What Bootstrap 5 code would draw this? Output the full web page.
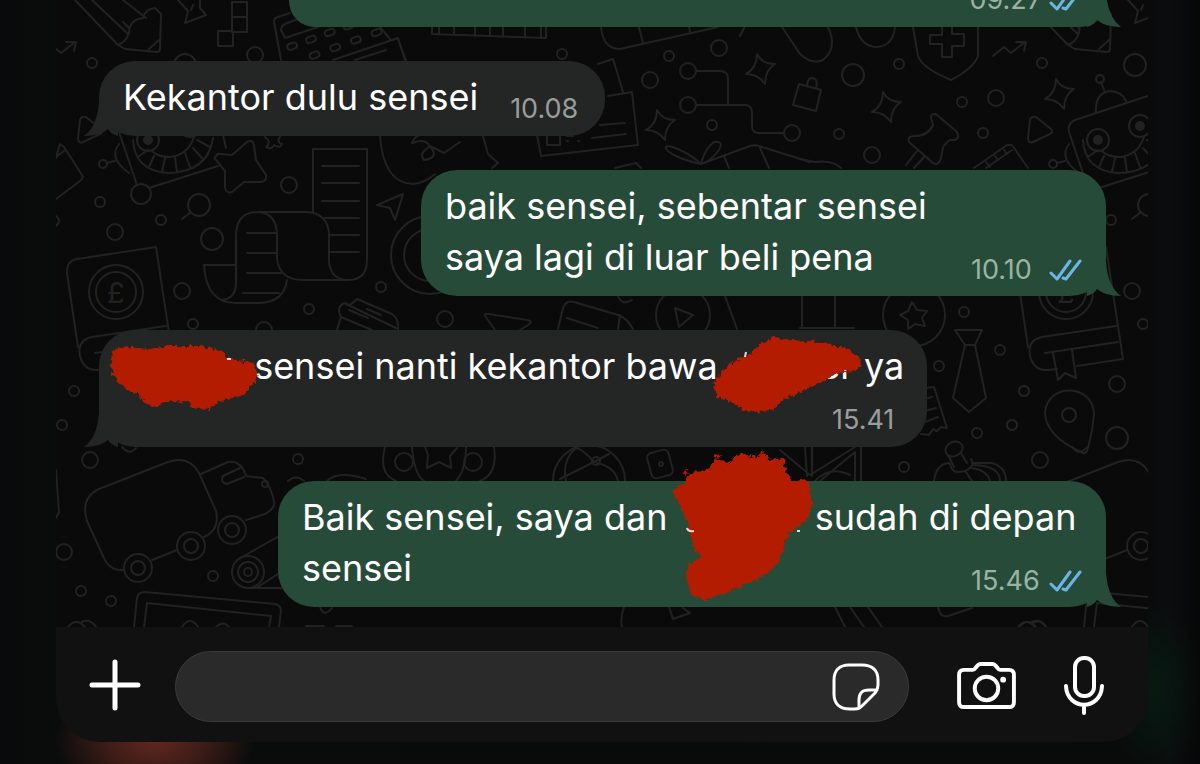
<!DOCTYPE html>
<html lang="id">
<head>
<meta charset="utf-8">
<meta name="viewport" content="width=device-width, initial-scale=1">
<title>Chat</title>
<link href="https://cdn.jsdelivr.net/npm/bootstrap@5.3.0/dist/css/bootstrap.min.css" rel="stylesheet">
<style>
  body {
    font-family: Inter, "Liberation Sans", sans-serif;
    color: #fff;
    background:
      radial-gradient(ellipse 100px 56px at 155px calc(100% - 22px), #60271f 0, #3c1c17 50%, transparent 100%),
      radial-gradient(ellipse 50px 90px at calc(100% - 46px) calc(100% - 75px), #071a12 0, transparent 100%),
      linear-gradient(90deg, #080a0b 0, #0a0c0c 40px, #090a0a calc(100% - 52px), #0b0c0e calc(100% - 30px), #060707 100%);
  }
  .chat-frame { padding: 0 52px 22px 56px; }
  .thread { background: #0a0a0a; padding: 0 42px 20px 43px; gap: 34px; min-height: 0; }
  .doodles { fill: none; stroke: #222; stroke-width: 2; stroke-linecap: round; stroke-linejoin: round; }
  .bubble { position: relative; flex: none; padding: 11px 24px 13px; border-radius: 36px; font-size: 36px; line-height: 51px; }
  .received { background: #242625; }
  .sent { background: #274b39; }
  .bubble-max { width: 828px; max-width: 100%; }
  .bubble-mid { width: 685px; max-width: 100%; }
  .bubble-cut { width: 817px; max-width: 100%; }
  .stamp { font-size: 27px; line-height: 28px; color: #9b9d9c; gap: 7px; }
  .stamp time { min-width: 71px; }
  .sent .stamp { color: #9ab3a4; }
  .stamp-row { margin-top: 14px; }
  .tail { position: absolute; bottom: 0; width: 34px; height: 42px; }
  .sent .tail { right: -15px; fill: #274b39; }
  .received .tail { left: -15px; fill: #242625; }
  .ticks { width: 33px; height: 24px; fill: none; stroke: #6cb6e6; stroke-width: 3; stroke-linecap: round; stroke-linejoin: round; }
  .hidden-word { position: relative; display: inline-block; height: 51px; vertical-align: top; text-align: right; }
  .word-a { width: 121px; }
  .word-b { width: 126px; }
  .word-c { width: 127px; }
  .scribble { position: absolute; fill: #b41c02; overflow: visible; }
  .word-a .scribble { left: -14px; top: 4px; width: 150px; height: 66px; }
  .word-b .scribble { left: -16px; top: -5px; width: 152px; height: 80px; }
  .word-c .scribble { left: -8px; top: -41px; width: 144px; height: 154px; }
  .composer { background: #111; border-radius: 0 0 44px 44px; padding: 24px 44px 20px 30px; }
  .tool { background: none; border: 0; padding: 0; line-height: 0; }
  .composer > .tool { padding-bottom: 3px; }
  .tool svg { fill: none; stroke: #fff; stroke-linecap: round; stroke-linejoin: round; }
  .entry { background: #2a2a2a; border: 1px solid #3b3b3b; border-radius: 36px; height: 71px; padding: 0 28px 0 24px; margin: 0 48px 0 31px; }
  .entry input { background: none; border: 0; outline: 0; color: #fff; font-size: 36px; min-width: 0; }
</style>
</head>
<body>
<main class="chat-frame d-flex flex-column vh-100 overflow-hidden">
  <section class="thread position-relative flex-grow-1 d-flex flex-column justify-content-end overflow-hidden">
    <svg class="doodles position-absolute top-0 start-0 w-100 h-100" viewBox="56 0 1092 627" preserveAspectRatio="xMidYMid slice" aria-hidden="true">
      <defs>
        <g id="tile">
          <!-- pencil -->
          <path d="M75 0L118 45L125 49L157 52Q160 52 160 49L161 14L155 8Q145 9 143 18Q129 20 129 33Q126 42 118 45M92 0L128 34M123 0L146 18M129 28l-6 -6M149 49L160 39"/>
          <path d="M43 56L54 47L61 53L75 42M66 42L76 42L74 51"/>
          <path d="M178 0L188 11L185 23L206 15L200 8V0M191 10l2 -5"/>
          <circle cx="92" cy="63" r="5"/><circle cx="185" cy="65" r="11"/>
          <path d="M80 120Q81 116 86 117L101 129Q104 132 100 134L83 142Q78 144 78 138Z"/>
          <!-- robot -->
          <path d="M198 96L125 120Q117 124 119 132L137 185M149 188L218 166M223 135L226 148M146 112Q145 92 161 91Q172 92 176 101M154 90L151 82"/>
          <circle cx="150" cy="79" r="4"/><circle cx="148" cy="140" r="11"/><circle cx="190" cy="126" r="11"/>
          <circle cx="148" cy="140" r="4" fill="#222"/><circle cx="190" cy="126" r="4" fill="#222"/>
          <path d="M133 140Q135 171 168 173Q208 172 213 138M152 151Q158 157 170 157Q188 155 194 137M139 156L148 150M149 167L154 156M162 172L165 158M177 172L175 158M190 167L185 153M202 158L193 148M210 147L197 140"/>
          <path d="M119 144Q108 158 129 173M115 161L107 163"/><circle cx="103" cy="164" r="4"/><circle cx="141" cy="194" r="10"/>
          <circle cx="100" cy="202" r="5"/><circle cx="199" cy="205" r="11"/><path d="M182 219L191 212"/>
          <circle cx="161" cy="220" r="5"/><circle cx="115" cy="232" r="8"/><circle cx="182" cy="291" r="8"/><circle cx="193" cy="324" r="5"/>
          <!-- coin book -->
          <path d="M78 347L67 273Q66 261 77 259L156 247L173 359L127 366M166 326L92 337Q77 340 80 356Q84 371 98 370L107 369M95 353L168 342M103 353L108 380L115 373L126 378L122 350"/>
          <circle cx="116" cy="292" r="27"/><circle cx="116" cy="292" r="20"/>
          <circle cx="74" cy="391" r="5"/><circle cx="62" cy="425" r="5"/><circle cx="90" cy="460" r="8"/><circle cx="64" cy="552" r="8"/>
          <!-- van -->
          <path d="M123 570Q109 571 103 556L87 521Q80 498 99 489L168 462Q189 455 199 473L216 511Q220 530 204 537M152 560L177 550M201 474L228 462Q241 460 246 476L263 478Q270 484 274 501Q276 508 265 514L246 520M240 468L223 476Q220 483 227 484L244 477"/>
          <circle cx="138" cy="568" r="14"/><circle cx="138" cy="568" r="7"/><circle cx="191" cy="546" r="14"/><circle cx="191" cy="546" r="7"/>
          <circle cx="232" cy="530" r="14"/><circle cx="232" cy="530" r="7"/><circle cx="265" cy="484" r="3"/>
          <circle cx="81" cy="591" r="5"/><circle cx="111" cy="601" r="5"/>
          <!-- picture frame -->
          <path d="M134 627L137 598Q138 592 145 592L275 604Q281 605 281 611L279 627M144 627L147 603L271 616L269 627M68 627Q76 617 85 627M82 622Q90 618 96 627M182 627Q190 615 198 627M216 627Q223 620 229 627"/>
          <path d="M122 447Q130 456 136 448"/>
        </g>
        <path id="spark" d="M-4 -15Q1 -5 14 -5Q4 1 4 15Q-3 5 -15 5Q-4 -1 -4 -15Z"/>
      </defs>
      <use href="#tile"/><use href="#tile" x="950"/>
      <g fill="#222" stroke="none" font-size="29"><text x="107" y="303">£</text><text x="1057" y="303">£</text></g>
      <use href="#spark" x="761" y="69"/><use href="#spark" x="661" y="125"/><use href="#spark" x="887" y="107"/><use href="#spark" x="1060" y="94"/>
      <path d="M56 158L60 144L64 147L82 175Q84 178 80 181L56 199M56 157L64 151M56 470L59 512L56 518M56 216Q62 221 56 226"/>
      <path d="M232 2h15v30h-15zM232 17h15M218 31h15v15h-15z"/>
      <!-- calculator -->
      <path d="M281 60L274 22Q274 18 278 17L290 13M281 30Q281 26 285 24L305 16M285 38L330 23M281 30L285 38M333 60L398 38L405 60M355 60L386 50M380 27L390 39"/>
      <g transform="rotate(-20 330 42)"><rect x="288" y="30" width="10" height="6" rx="3"/><rect x="308" y="30" width="10" height="6" rx="3"/><rect x="328" y="30" width="10" height="6" rx="3"/><rect x="348" y="30" width="10" height="6" rx="3"/><rect x="306" y="46" width="10" height="6" rx="3"/><rect x="328" y="46" width="10" height="6" rx="3"/><rect x="350" y="46" width="10" height="6" rx="3"/><rect x="372" y="46" width="10" height="6" rx="3"/></g>
      <circle cx="255" cy="55" r="8"/><circle cx="289" cy="185" r="8"/><circle cx="212" cy="239" r="11"/><circle cx="264" cy="330" r="8"/><circle cx="309" cy="309" r="5"/><circle cx="381" cy="287" r="5"/><circle cx="445" cy="319" r="8"/>
      <path d="M216 156Q217 153 221 154L232 155L247 142Q253 139 254 145L256 160L266 175Q267 181 261 182L244 182L232 192Q227 194 225 188V171L216 160Q213 158 216 156Z"/>
      <path d="M265 137Q272 142 266 147Q272 150 274 145Q280 149 282 144Q276 142 280 137"/>
      <!-- rolled receipt -->
      <path d="M236 286V236Q236 212 258 212H306Q329 213 329 236V262Q331 280 348 280Q367 280 367 260V149H313V212M258 212Q277 213 277 236V258Q279 280 303 280H347M204 265H236M204 265Q206 303 236 303H260Q284 302 287 280M236 285Q235 298 223 300M322 166h37M322 183h37M322 201h37M325 218h34M331 235h28M331 252h28M247 233h29M247 253h29M247 273h34M243 293h36"/>
      <path d="M377 205L403 194L395 220L390 208ZM380 135Q383 183 413 184Q425 183 435 174M412 143Q415 136 420 135"/>
      <circle cx="430" cy="255" r="39"/><circle cx="430" cy="255" r="26"/>
      <path d="M337 330L341 317Q336 307 344 303L350 305L357 299L392 314Q399 318 398 330M344 303L396 328M341 317L372 330M349 310L368 318M367 309L381 315"/>
      <path d="M495 330L485 316Q484 313 489 314L527 320Q534 321 528 325L520 330"/>
      <path d="M558 329L563 308Q566 300 574 302L618 315Q627 318 633 329M567 318L598 328M620 315L618 329M618 296Q622 306 632 300M725 296L737 329"/>
      <circle cx="683" cy="315" r="27"/><path d="M675 308L693 315L679 327Z"/>
      <!-- piano, ticket, circuit -->
      <path d="M432 27V34L546 38V27M439 27V34M454 27V34M475 27V35M490 27V35M503 27V36M525 27V37M541 27V38M400 45L406 60"/>
      <circle cx="562" cy="54" r="5"/><path d="M598 64L613 59L623 92M608 96L632 92L638 145L541 156L537 135M600 125L625 123M592 138L626 134M547 136V145H560V136M567 141h1M578 141h1M567 136h6"/>
      <circle cx="688" cy="71" r="8"/><circle cx="688" cy="105" r="8"/><circle cx="792" cy="133" r="8"/><circle cx="650" cy="80" r="8"/><circle cx="669" cy="56" r="5"/><circle cx="719" cy="48" r="8"/><circle cx="712" cy="125" r="5"/>
      <path d="M696 71H720Q728 71 728 79V105M696 105H745Q752 105 752 113V126Q752 133 759 133H784M601 27Q603 49 620 49L718 27M639 27L643 43M689 27L690 32M740 36L744 28M782 27L800 54"/>
      <path d="M701 164C660 155 657 139 680 150Q693 156 701 164Q705 148 714 142Q724 140 719 150Q710 162 701 164L750 146Q756 144 762 147L810 162M724 156L729 168M760 148L769 168M413 143Q424 138 430 146Q440 158 424 160Q418 154 430 146L444 153L460 142M483 136L488 154L498 163L492 168M615 168L636 163L641 168"/>
      <path d="M828 27Q838 48 823 60Q812 65 800 54M856 27Q861 47 877 47Q893 46 895 27M913 27L918 56Q922 68 951 80Q974 68 978 56V27"/>
      <path d="M942 27V35H930V44H942V57H952V46H964V34H952V27"/>
      <circle cx="853" cy="75" r="11"/><circle cx="899" cy="64" r="5"/><circle cx="962" cy="102" r="5"/><circle cx="996" cy="98" r="8"/><circle cx="839" cy="134" r="5"/><circle cx="872" cy="155" r="8"/><circle cx="983" cy="133" r="5"/>
      <path d="M799 84L821 90L816 111L793 105ZM807 86Q808 75 815 79Q818 81 816 88"/>
      <path d="M931 118Q931 112 937 115L956 131Q961 137 955 140L950 140Q942 145 942 153Q940 167 933 163L909 142Q907 136 915 136Q928 136 933 125ZM917 151L906 165M924 157L914 168"/>
      <path d="M974 168L1007 145L1012 145L1028 168M986 168L1012 150M986 162l4 5M995 156l3 4M1004 150l3 4M800 159L815 162Q833 160 841 168"/>
      <!-- band between the second and third bubble -->
      <path d="M802 296V327M835 296V327M800 328H854M912 302L917 310L927 311L922 318L925 326L915 324L908 329L908 320L900 315L908 311Z"/><circle cx="914" cy="315" r="31"/>
      <circle cx="964" cy="312" r="5"/><circle cx="1000" cy="350" r="5"/><circle cx="939" cy="366" r="5"/><circle cx="1024" cy="391" r="5"/><circle cx="1012" cy="425" r="5"/><circle cx="977" cy="433" r="5"/><circle cx="1117" cy="384" r="8"/><circle cx="1117" cy="438" r="11"/><circle cx="904" cy="467" r="5"/>
      <path d="M955 330H982L975 345H965ZM965 345L953 398L969 412L986 398L975 345M925 388L934 387L947 428L941 427L937 431L933 429L929 435L921 434M925 399L932 397M925 411L936 408M925 422L938 417"/>
      <path d="M1083 453Q1045 436 1045 412C1048 382 1093 384 1094 414Q1093 430 1087 451Q1085 454 1083 453Z"/><circle cx="1069" cy="415" r="7"/>
      <ellipse cx="954" cy="449" rx="9" ry="7" transform="rotate(-25 954 449)"/><path d="M948 455L954 467M961 453L967 463M950 464Q952 475 965 471Q976 466 971 459M934 481Q936 464 949 463M972 463H992Q1006 467 1006 481M966 472L972 481M972 468Q987 470 990 481M974 465Q1000 466 1000 481"/>
      <!-- band above the last bubble -->
      <circle cx="298" cy="459" r="5"/><circle cx="404" cy="462" r="9"/><circle cx="473" cy="462" r="9"/>
      <path d="M385 447Q378 474 396 481M494 447Q498 474 480 481M412 447Q414 474 424 481M466 447Q466 470 456 481M425 447L428 455L427 468L439 462L451 468L450 456L457 448M327 481Q338 470 366 479M288 481Q296 474 304 481M553 481A36 36 0 0 1 625 481M566 481Q562 460 575 449M560 479L594 462L609 454M594 462Q580 446 574 449M597 463Q615 467 618 481"/>
      <circle cx="596" cy="461" r="4"/><rect x="649" y="451" width="22" height="26" rx="5" transform="rotate(-15 660 464)"/><circle cx="661" cy="464" r="2"/>
      <path d="M805 447L807 476M812 447V476M780 450L810 475L855 447M820 481L855 452V481M861 447V481M815 481Q830 465 850 475"/>
      <!-- roller -->
      <circle cx="248" cy="572" r="16"/><circle cx="248" cy="572" r="10"/><circle cx="248" cy="572" r="4"/><circle cx="213" cy="576" r="5"/><path d="M240 558L290 530M258 587L290 566M248 588H300"/>
      <path d="M306 626h18M336 626h16M320 607Q324 618 332 608M624 607Q620 618 622 627M669 607L673 619L690 613L683 608M835 607L845 627M850 607L864 627M868 607L882 627M938 607Q940 618 948 616L972 608M1019 627Q1028 617 1036 627M1033 623Q1040 618 1046 627"/>
    </svg>

    <article class="bubble bubble-cut sent align-self-end d-flex justify-content-end align-items-end">
      <div class="stamp d-flex align-items-center"><time>09.27</time><svg class="ticks" viewBox="0 0 33 24"><path d="M2 15L8 21L21 3M14 20L17 21L31 3"/></svg></div>
      <svg class="tail" viewBox="0 0 34 42"><path d="M0 42Q7 40 10 35Q18 42 34 42Q21 33 19 8L0 8Z"/></svg>
    </article>

    <article class="bubble received align-self-start d-flex align-items-end">
      <div>Kekantor dulu sensei</div>
      <div class="stamp ms-4 ps-2"><time class="d-block">10.08</time></div>
      <svg class="tail" viewBox="0 0 34 42"><path d="M34 42Q27 40 24 35Q16 42 0 42Q13 33 15 8L34 8Z"/></svg>
    </article>

    <article class="bubble bubble-mid sent align-self-end d-flex align-items-end">
      <div class="flex-grow-1">baik sensei, sebentar sensei<br>saya lagi di luar beli pena</div>
      <div class="stamp d-flex align-items-center position-absolute end-0 bottom-0 me-4 pb-2 mb-1"><time>10.10</time><svg class="ticks" viewBox="0 0 33 24"><path d="M2 15L8 21L21 3M14 20L17 21L31 3"/></svg></div>
      <svg class="tail" viewBox="0 0 34 42"><path d="M0 42Q7 40 10 35Q18 42 34 42Q21 33 19 8L0 8Z"/></svg>
    </article>

    <article class="bubble bubble-max received align-self-start">
      <div class="text-nowrap"><span class="hidden-word word-a"><svg class="scribble" viewBox="0 0 150 66"><g filter="url(#rough)"><path d="M3 8Q4 3 14 2L40 4L60 1L90 1L112 5L120 14L143 17L148 28L146 37L135 49L112 56L98 64L84 63L78 56L58 57L44 62L34 56L30 49L18 45L6 34L1 20Z"/></g><path d="M118 14h4" stroke="#ddd" stroke-width="2"/></svg></span> sensei nanti kekantor bawa <span class="hidden-word word-b">er<svg class="scribble" viewBox="0 0 152 80"><g filter="url(#rough)"><path d="M50 6L62 2L80 4L110 6L132 12L147 21L149 29L142 35L124 37L112 45L100 50L86 57L72 63L62 73L46 76L32 74L20 66L6 62L1 47L8 40L12 33L24 24L40 18Z"/></g><path d="M34 16l-1 5" stroke="#ddd" stroke-width="2"/></svg></span> ya</div>
      <div class="stamp stamp-row d-flex justify-content-end"><time>15.41</time></div>
      <svg class="tail" viewBox="0 0 34 42"><path d="M34 42Q27 40 24 35Q16 42 0 42Q13 33 15 8L34 8Z"/></svg>
    </article>

    <article class="bubble bubble-max sent align-self-end">
      <div>Baik sensei, saya dan <span class="hidden-word word-c"><svg class="scribble" viewBox="0 0 144 154"><g filter="url(#rough)"><path d="M2 40L14 32L22 22L40 18L46 8L58 12L72 1L82 8L92 4L104 10L114 8L116 22L124 30L138 28L143 56L136 68L118 84L114 96L108 112L92 126L70 136L48 145L34 149L22 145L16 124L18 114L32 106L24 98L18 74L12 60L6 46Z"/><path d="M22 28l-8 -8M50 14l-3 -10M60 14l10 -10 12 4 12 -6 6 10 12 -4" fill="none" stroke="#b41c02" stroke-width="5" stroke-dasharray="4 3"/></g><path d="M17 77q1 4 7 3M127 80h3" fill="none" stroke="#ddd" stroke-width="2"/></svg></span> sudah di depan sensei</div>
      <div class="stamp d-flex align-items-center position-absolute end-0 bottom-0 me-4 pb-2 mb-1"><time>15.46</time><svg class="ticks" viewBox="0 0 33 24"><path d="M2 15L8 21L21 3M14 20L17 21L31 3"/></svg></div>
      <svg class="tail" viewBox="0 0 34 42"><path d="M0 42Q7 40 10 35Q18 42 34 42Q21 33 19 8L0 8Z"/></svg>
    </article>
  </section>

  <form class="composer d-flex align-items-center">
    <button class="tool" type="button" aria-label="Lampirkan"><svg width="58" height="58" viewBox="0 0 58 58" stroke-width="5"><path d="M29 6V52M6 29H52"/></svg></button>
    <div class="entry flex-grow-1 d-flex align-items-center">
      <input class="flex-grow-1" type="text" aria-label="Pesan">
      <button class="tool" type="button" aria-label="Stiker"><svg width="48" height="48" viewBox="0 0 48 48" stroke-width="3"><path d="M17 2H30C41 2 46 8 46 17V22C46 26 45 27 43 30L31 42C28 45 27 46 22 46H18C7 46 2 40 2 31V17C2 8 7 2 17 2ZM45 27H37C29 27 27 31 27 37V45"/></svg></button>
    </div>
    <button class="tool" type="button" aria-label="Kamera"><svg width="59" height="47" viewBox="0 0 60 48" stroke-width="4"><path d="M7 8H16C19 8 20 2 24 2H36C40 2 41 8 44 8H53Q58 8 58 13V41Q58 46 53 46H7Q2 46 2 41V13Q2 8 7 8Z"/><circle cx="30" cy="27" r="12"/><circle cx="47" cy="18" r="3" fill="#fff" stroke="none"/></svg></button>
    <button class="tool ms-5" type="button" aria-label="Rekam suara"><svg width="40" height="60" viewBox="0 0 40 60" stroke-width="4"><rect x="11" y="3" width="19" height="38" rx="9"/><path d="M2 31C3 56 37 56 38 31M20 50V58"/></svg></button>
  </form>
</main>
<svg class="position-absolute" width="0" height="0" aria-hidden="true"><filter id="rough" x="-10%" y="-10%" width="120%" height="120%"><feTurbulence type="fractalNoise" baseFrequency="0.25" numOctaves="2" seed="4"/><feDisplacementMap in="SourceGraphic" scale="7" xChannelSelector="R" yChannelSelector="G"/></filter></svg>
<script src="https://cdn.jsdelivr.net/npm/bootstrap@5.3.0/dist/js/bootstrap.bundle.min.js"></script>
</body>
</html>
